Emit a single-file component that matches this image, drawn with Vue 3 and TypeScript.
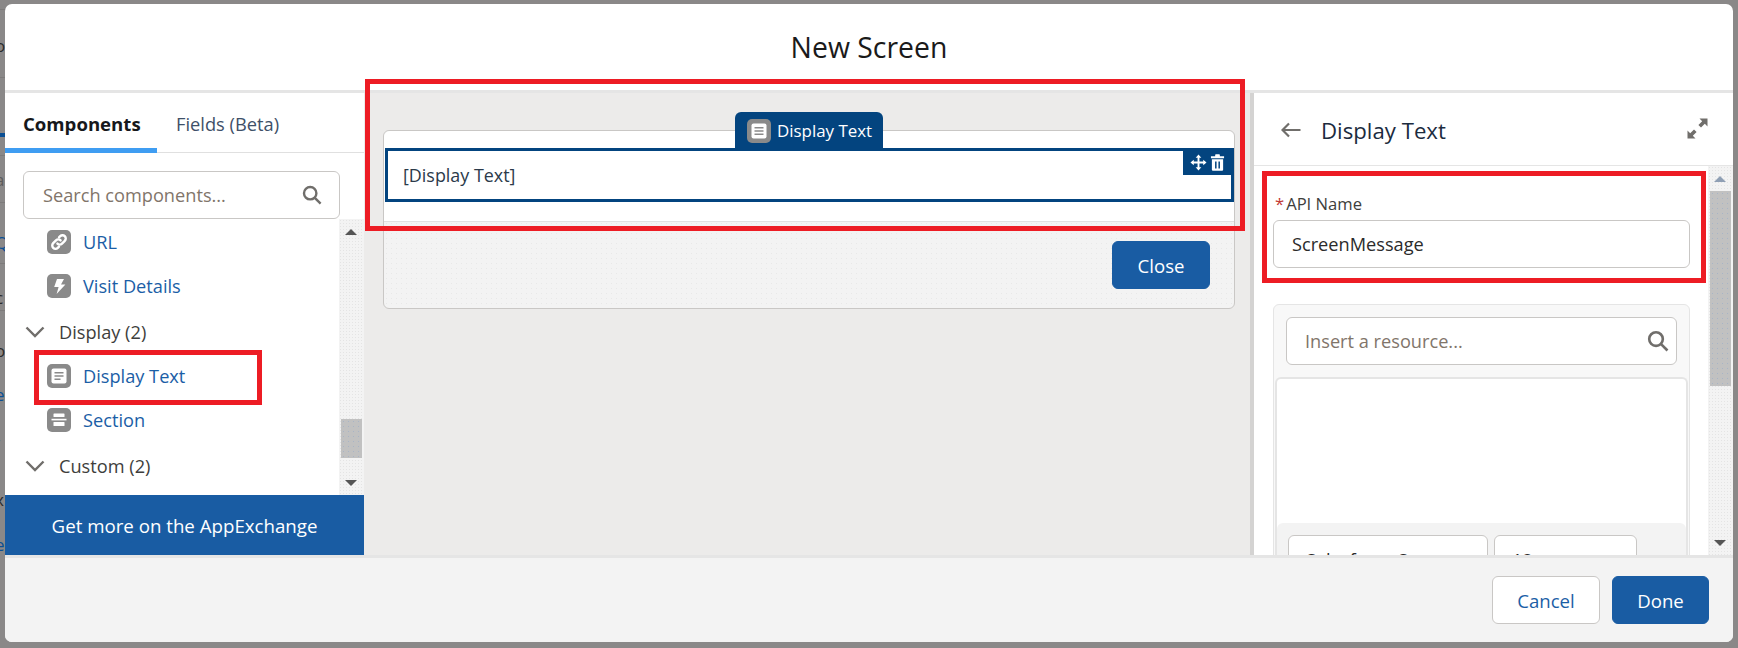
<script setup lang="ts">
interface Sliver { y: number; ch: string; tone: string }
const slivers: Sliver[] = [
  { y: 36, ch: 'o', tone: 'dark' },
  { y: 98, ch: 'l', tone: 'dark' },
  { y: 170, ch: 'a', tone: 'grey' },
  { y: 233, ch: 'Q', tone: 'blue' },
  { y: 288, ch: 'c', tone: 'dark' },
  { y: 341, ch: 'o', tone: 'dark' },
  { y: 385, ch: 'e', tone: 'blue' },
  { y: 429, ch: '-', tone: 'dark' },
  { y: 490, ch: 'x', tone: 'dark' },
  { y: 535, ch: 'e', tone: 'blue' },
]
const rules: number[] = [9, 77, 155, 202, 263, 310]
</script>

<template>
  <div class="page">
    <div class="backdrop">
      <span v-for="r in rules" :key="r" class="rule" :style="{ top: r + 'px' }"></span>
      <span class="bluebar"></span>
      <span v-for="s in slivers" :key="s.y" class="sliver" :class="s.tone" :style="{ top: s.y + 'px' }">{{ s.ch }}</span>
    </div>

    <div class="modal">
      <header class="modal-head"><h1>New Screen</h1></header>

      <div class="modal-body">
        <aside class="left">
          <div class="tabs">
            <div class="tab active">Components</div>
            <div class="tab">Fields (Beta)</div>
          </div>
          <div class="search-wrap">
            <div class="search">
              <span class="ph">Search components...</span>
              <svg class="mag" viewBox="0 0 20 20"><circle cx="8.2" cy="8.2" r="6.2" /><path d="M12.8 12.8 L18.6 18.6" /></svg>
            </div>
          </div>
          <div class="list-row">
            <div class="list">
              <div class="item">
                <span class="ico">
                  <svg viewBox="0 0 24 24"><g fill="none" stroke="#fff" stroke-width="2.4" stroke-linecap="round"><path d="M10.4 13.6 a3.2 3.2 0 0 0 4.6 0 l2.8-2.8 a3.2 3.2 0 0 0-4.6-4.6 l-1.2 1.2" /><path d="M13.6 10.4 a3.2 3.2 0 0 0-4.6 0 l-2.8 2.8 a3.2 3.2 0 0 0 4.6 4.6 l1.2-1.2" /></g></svg>
                </span>
                <a>URL</a>
              </div>
              <div class="item">
                <span class="ico">
                  <svg viewBox="0 0 24 24"><path fill="#fff" d="M10 5 h7 l-3 5.4 h4.4 L9.6 20 l2-7 H7.2 Z" /></svg>
                </span>
                <a>Visit Details</a>
              </div>
              <div class="group">
                <svg class="chev" viewBox="0 0 20 12"><path d="M1.5 1.5 L10 10 L18.5 1.5" /></svg>
                <span>Display (2)</span>
              </div>
              <div class="item">
                <span class="ico">
                  <svg viewBox="0 0 24 24"><rect x="4.5" y="4.5" width="15" height="15" rx="2" fill="#fff" /><path d="M7.5 8.7h9M7.5 12h9M7.5 15.3h6" stroke="#8a8a8a" stroke-width="1.6" /></svg>
                </span>
                <a>Display Text</a>
              </div>
              <div class="item">
                <span class="ico">
                  <svg viewBox="0 0 24 24"><g fill="#fff"><rect x="6.5" y="5.5" width="11" height="3.6" rx=".6" /><rect x="4.5" y="10.8" width="15" height="1.6" /><rect x="6.5" y="14" width="11" height="4" rx=".6" /></g></svg>
                </span>
                <a>Section</a>
              </div>
              <div class="group">
                <svg class="chev" viewBox="0 0 20 12"><path d="M1.5 1.5 L10 10 L18.5 1.5" /></svg>
                <span>Custom (2)</span>
              </div>
            </div>
            <div class="scrollbar">
              <span class="arrow up dark"></span>
              <span class="thumb left-thumb"></span>
              <span class="arrow down dark"></span>
            </div>
          </div>
          <div class="appex">Get more on the AppExchange</div>
        </aside>

        <main class="center">
          <div class="card">
            <div class="tag">
              <span class="ico small">
                <svg viewBox="0 0 24 24"><rect x="4.5" y="4.5" width="15" height="15" rx="2" fill="#fff" /><path d="M7.5 8.7h9M7.5 12h9M7.5 15.3h9" stroke="#8a8a8a" stroke-width="1.6" /></svg>
              </span>
              <span>Display Text</span>
            </div>
            <div class="card-top">
              <div class="selected">
                <span>[Display Text]</span>
                <div class="actions">
                  <svg viewBox="0 0 18 18" class="act"><path fill="#fff" d="M9 0.5 L12 4 H10 V8 H14 V6 L17.5 9 L14 12 V10 H10 V14 H12 L9 17.5 L6 14 H8 V10 H4 V12 L0.5 9 L4 6 V8 H8 V4 H6 Z" /></svg>
                  <svg viewBox="0 0 16 18" class="act trash"><path fill="#fff" fill-rule="evenodd" d="M5.5 2.2 V1 a.8.8 0 0 1 .8-.8 h3.4 a.8.8 0 0 1 .8.8 V2.2 H15 V4.4 H1 V2.2 Z M2 5.6 H14 V16.6 a1.2 1.2 0 0 1-1.2 1.2 H3.2 A1.2 1.2 0 0 1 2 16.6 Z M5.4 8 V15.4 H7 V8 Z M9 8 V15.4 H10.6 V8 Z" /></svg>
                </div>
              </div>
            </div>
            <div class="card-foot">
              <button class="btn brand">Close</button>
            </div>
          </div>
        </main>

        <aside class="right">
          <div class="right-head">
            <svg class="back" viewBox="0 0 20 16"><path d="M8 1.5 L1.5 8 L8 14.5 M2 8 H19.5" /></svg>
            <span class="right-title">Display Text</span>
            <svg class="expand" viewBox="0 0 21 21"><path fill="#706e6b" d="M12.5 0.5 H20.5 V8.5 L17.8 5.8 L14 9.6 L11.4 7 L15.2 3.2 Z M0.5 12.5 L3.2 15.2 L7 11.4 L9.6 14 L5.8 17.8 L8.5 20.5 H0.5 Z" /></svg>
          </div>
          <div class="right-scroll">
            <div class="right-content">
              <label class="lbl"><span class="req">*</span>API Name</label>
              <div class="input">ScreenMessage</div>
              <div class="editor">
                <div class="res-search">
                  <span class="ph">Insert a resource...</span>
                  <svg class="mag big" viewBox="0 0 20 20"><circle cx="8.2" cy="8.2" r="6.2" /><path d="M12.8 12.8 L18.6 18.6" /></svg>
                </div>
                <div class="rte">
                  <div class="rte-area"></div>
                  <div class="rte-bar">
                    <div class="sel font">Salesforce Sans</div>
                    <div class="sel size">12</div>
                  </div>
                </div>
              </div>
            </div>
            <div class="scrollbar">
              <span class="arrow up soft"></span>
              <span class="thumb right-thumb"></span>
              <span class="arrow down dark"></span>
            </div>
          </div>
        </aside>
      </div>

      <footer class="modal-foot">
        <button class="btn neutral">Cancel</button>
        <button class="btn brand">Done</button>
      </footer>
    </div>

    <div class="mark mark-canvas"></div>
    <div class="mark mark-field"></div>
    <div class="mark mark-item"></div>
  </div>
</template>

<style>
html, body { margin: 0; padding: 0; background: #8a8888; }
</style>

<style scoped>
* { box-sizing: border-box; }
.page {
  position: relative;
  width: 1738px;
  height: 648px;
  overflow: hidden;
  padding: 4px 5px 6px;
  background: #8a8888;
  font-family: "Open Sans", "Noto Sans", sans-serif;
  color: #3e3e3c;
}
.backdrop { position: absolute; inset: 0 auto 0 0; width: 5px; overflow: hidden; }
.rule { position: absolute; left: 0; width: 5px; height: 1px; background: #7d7b7b; }
.bluebar { position: absolute; left: 0; top: 133px; width: 5px; height: 4px; background: #0b4f94; }
.sliver { position: absolute; left: -5px; font-size: 17px; line-height: 20px; }
.sliver.dark { color: #2b2b2b; }
.sliver.grey { color: #5c5c5c; }
.sliver.blue { color: #0b4f94; }

.modal {
  position: relative;
  height: 638px;
  display: flex;
  flex-direction: column;
  background: #fff;
  border-radius: 7px;
  overflow: hidden;
}
.modal-head {
  flex: none;
  height: 89px;
  display: flex;
  align-items: center;
  justify-content: center;
  border-bottom: 3px solid #e5e5e5;
}
.modal-head h1 {
  margin: 0;
  font-size: 28.4px;
  font-weight: 400;
  color: #1a1a1a;
}
.modal-body { flex: none; height: 462px; display: flex; overflow: hidden; }

/* left panel */
.left { flex: none; width: 359px; display: flex; flex-direction: column; background: #fff; }
.tabs { flex: none; height: 60px; display: flex; border-bottom: 1px solid #e0e0e0; }
.tab {
  height: 60px;
  padding: 18px 0 0 18px;
  font-size: 18.3px;
  color: #3e5068;
}
.tab.active {
  width: 152px;
  font-size: 18.6px;
  font-weight: 700;
  color: #16181b;
  border-bottom: 5px solid #3f9df2;
}
.tab:not(.active) { padding-left: 19px; }
.search-wrap { flex: none; height: 66px; padding: 18px 24px 0 18px; }
.search, .res-search, .input {
  display: flex;
  align-items: center;
  height: 48px;
  background: #fff;
  border: 1px solid #c9c7c5;
  border-radius: 6px;
  font-size: 18.2px;
}
.search { padding: 0 17px 0 19px; justify-content: space-between; }
.ph { color: #81756a; }
.mag { width: 20px; height: 20px; fill: none; stroke: #706e6b; stroke-width: 2.4; }
.mag.big { width: 22px; height: 22px; }
.list-row { flex: 1; min-height: 0; display: flex; }
.list { flex: 1; min-width: 0; padding-top: 1px; overflow: hidden; }
.item { height: 44px; display: flex; align-items: center; padding-left: 42px; }
.item a { margin-left: 12px; font-size: 18.2px; color: #1b5ea6; }
.ico {
  flex: none;
  width: 24px;
  height: 24px;
  border-radius: 5px;
  background: #8a8a8a;
  display: block;
}
.ico svg { display: block; width: 24px; height: 24px; }
.group {
  height: 44px;
  margin-top: 2px;
  display: flex;
  align-items: center;
  padding-left: 20px;
  font-size: 18.2px;
  color: #3e3e3c;
}
.chev { width: 20px; height: 12px; margin-right: 14px; fill: none; stroke: #706e6b; stroke-width: 2.4; }
.scrollbar {
  position: relative;
  flex: none;
  width: 25px;
  background: #f3f3f3;
  background-image: radial-gradient(#e4e4e4 .6px, transparent .7px);
  background-size: 3px 3px;
}
.arrow { position: absolute; left: 6px; width: 0; height: 0; border-left: 6px solid transparent; border-right: 6px solid transparent; }
.arrow.up.dark { top: 10px; border-bottom: 6px solid #555; }
.arrow.up.soft { top: 10px; border-bottom: 6px solid #8f9fb4; }
.arrow.down { bottom: 9px; border-top: 6px solid #555; }
.thumb {
  position: absolute;
  left: 2px;
  width: 21px;
  background: #c1c1c1;
  background-image: radial-gradient(#a8b4c6 .7px, transparent .8px);
  background-size: 5px 5px;
}
.left-thumb { top: 200px; height: 39px; }
.right-thumb { top: 25px; height: 195px; }
.appex {
  flex: none;
  height: 60px;
  display: flex;
  align-items: center;
  justify-content: center;
  background: #195ca3;
  color: #fff;
  font-size: 18.7px;
}

/* canvas */
.center { flex: 1; min-width: 0; padding: 37px 15px 0 19px; background: #ecebea; }
.card {
  position: relative;
  height: 179px;
  background: #f3f3f3;
  background-image: radial-gradient(#e8e8e8 .6px, transparent .7px);
  background-size: 5px 5px;
  border: 1px solid #c9c7c5;
  border-radius: 6px;
}
.card-top {
  height: 91px;
  padding: 17px 0 0 1px;
  background: #fff;
  border-bottom: 1px solid #e0e0e0;
  border-radius: 6px 6px 0 0;
}
.selected {
  position: relative;
  height: 54px;
  display: flex;
  align-items: center;
  padding-left: 15px;
  border: 3px solid #03447f;
  font-size: 17.9px;
  color: #2b3a4a;
}
.tag {
  position: absolute;
  top: -19px;
  left: 50%;
  transform: translateX(-50%);
  z-index: 1;
  width: 148px;
  height: 37px;
  padding-left: 12px;
  display: flex;
  align-items: center;
  gap: 6px;
  background: #03447f;
  border-radius: 6px 6px 0 0;
  color: #fff;
  font-size: 16.9px;
}
.ico.small { width: 24px; height: 24px; }
.actions {
  position: absolute;
  top: 0;
  right: 0;
  width: 48px;
  height: 24px;
  padding: 3px 3px 0 7px;
  display: flex;
  align-items: flex-start;
  gap: 3px;
  background: #03447f;
}
.act { width: 17px; height: 17px; display: block; }
.act.trash { width: 15px; height: 17px; }
.card-foot { height: 86px; padding: 19px 24px 0 0; display: flex; justify-content: flex-end; align-items: flex-start; }
.btn {
  height: 48px;
  border-radius: 6px;
  font-family: inherit;
  font-size: 18.6px;
  cursor: pointer;
}
.btn.brand { width: 98px; background: #195ca3; border: 1px solid #195ca3; color: #fff; }
.btn.neutral { width: 108px; background: #fff; border: 1px solid #c9c7c5; color: #1b5ea6; }

/* right panel */
.right {
  flex: none;
  width: 483px;
  display: flex;
  flex-direction: column;
  border-left: 4px solid #d4d3d2;
  background: #fff;
}
.right-head {
  flex: none;
  height: 73px;
  display: flex;
  align-items: center;
  padding: 0 25px 0 27px;
  border-bottom: 1px solid #e5e5e5;
}
.back { width: 20px; height: 16px; fill: none; stroke: #706e6b; stroke-width: 2.2; margin-top: 1px; }
.right-title { margin-left: 20px; font-size: 22.2px; color: #1c2b3e; margin-top: 3px; }
.expand { width: 21px; height: 21px; margin-left: auto; margin-top: -1px; }
.right-scroll { flex: 1; min-height: 0; display: flex; }
.right-content { flex: 1; min-width: 0; padding: 28px 18px 0 19px; overflow: hidden; }
.lbl { display: block; height: 26px; font-size: 16.6px; line-height: 20px; color: #3e3e3c; padding-left: 2px; }
.req { color: #c23934; margin-right: 2px; }
.input { padding-left: 18px; color: #2b2b2b; }
.editor {
  margin-top: 36px;
  padding: 12px 1px 0;
  height: 260px;
  background: #f8f8f8;
  border: 1px solid #e5e5e5;
  border-radius: 6px 6px 0 0;
}
.res-search { margin: 0 11px; padding: 0 7px 0 18px; justify-content: space-between; }
.rte {
  margin-top: 12px;
  height: 200px;
  background: #fff;
  border: 2px solid #e5e5e5;
  border-bottom: 0;
  border-radius: 6px 6px 0 0;
}
.rte-area { height: 144px; }
.rte-bar {
  height: 60px;
  display: flex;
  gap: 6px;
  padding: 12px 0 0 11px;
  background: #f3f3f3;
  border-radius: 6px 6px 0 0;
}
.sel {
  height: 48px;
  padding: 12px 0 0 17px;
  background: #fff;
  border: 1px solid #c9c7c5;
  border-radius: 6px;
  font-size: 18.2px;
  color: #2b2b2b;
}
.sel.font { width: 200px; }
.sel.size { width: 143px; }

/* footer */
.modal-foot {
  flex: 1;
  display: flex;
  justify-content: flex-end;
  gap: 12px;
  padding: 18px 24px 0 0;
  background: #f3f3f3;
  border-top: 3px solid #e5e5e5;
}
.modal-foot .btn.brand { width: 97px; }

/* red annotation boxes */
.mark { position: absolute; border: 5px solid #ed1c24; pointer-events: none; z-index: 5; }
.mark-canvas { left: 365px; top: 79px; width: 880px; height: 152px; }
.mark-field { left: 1262px; top: 171px; width: 444px; height: 112px; }
.mark-item { left: 34px; top: 350px; width: 228px; height: 55px; }
</style>
